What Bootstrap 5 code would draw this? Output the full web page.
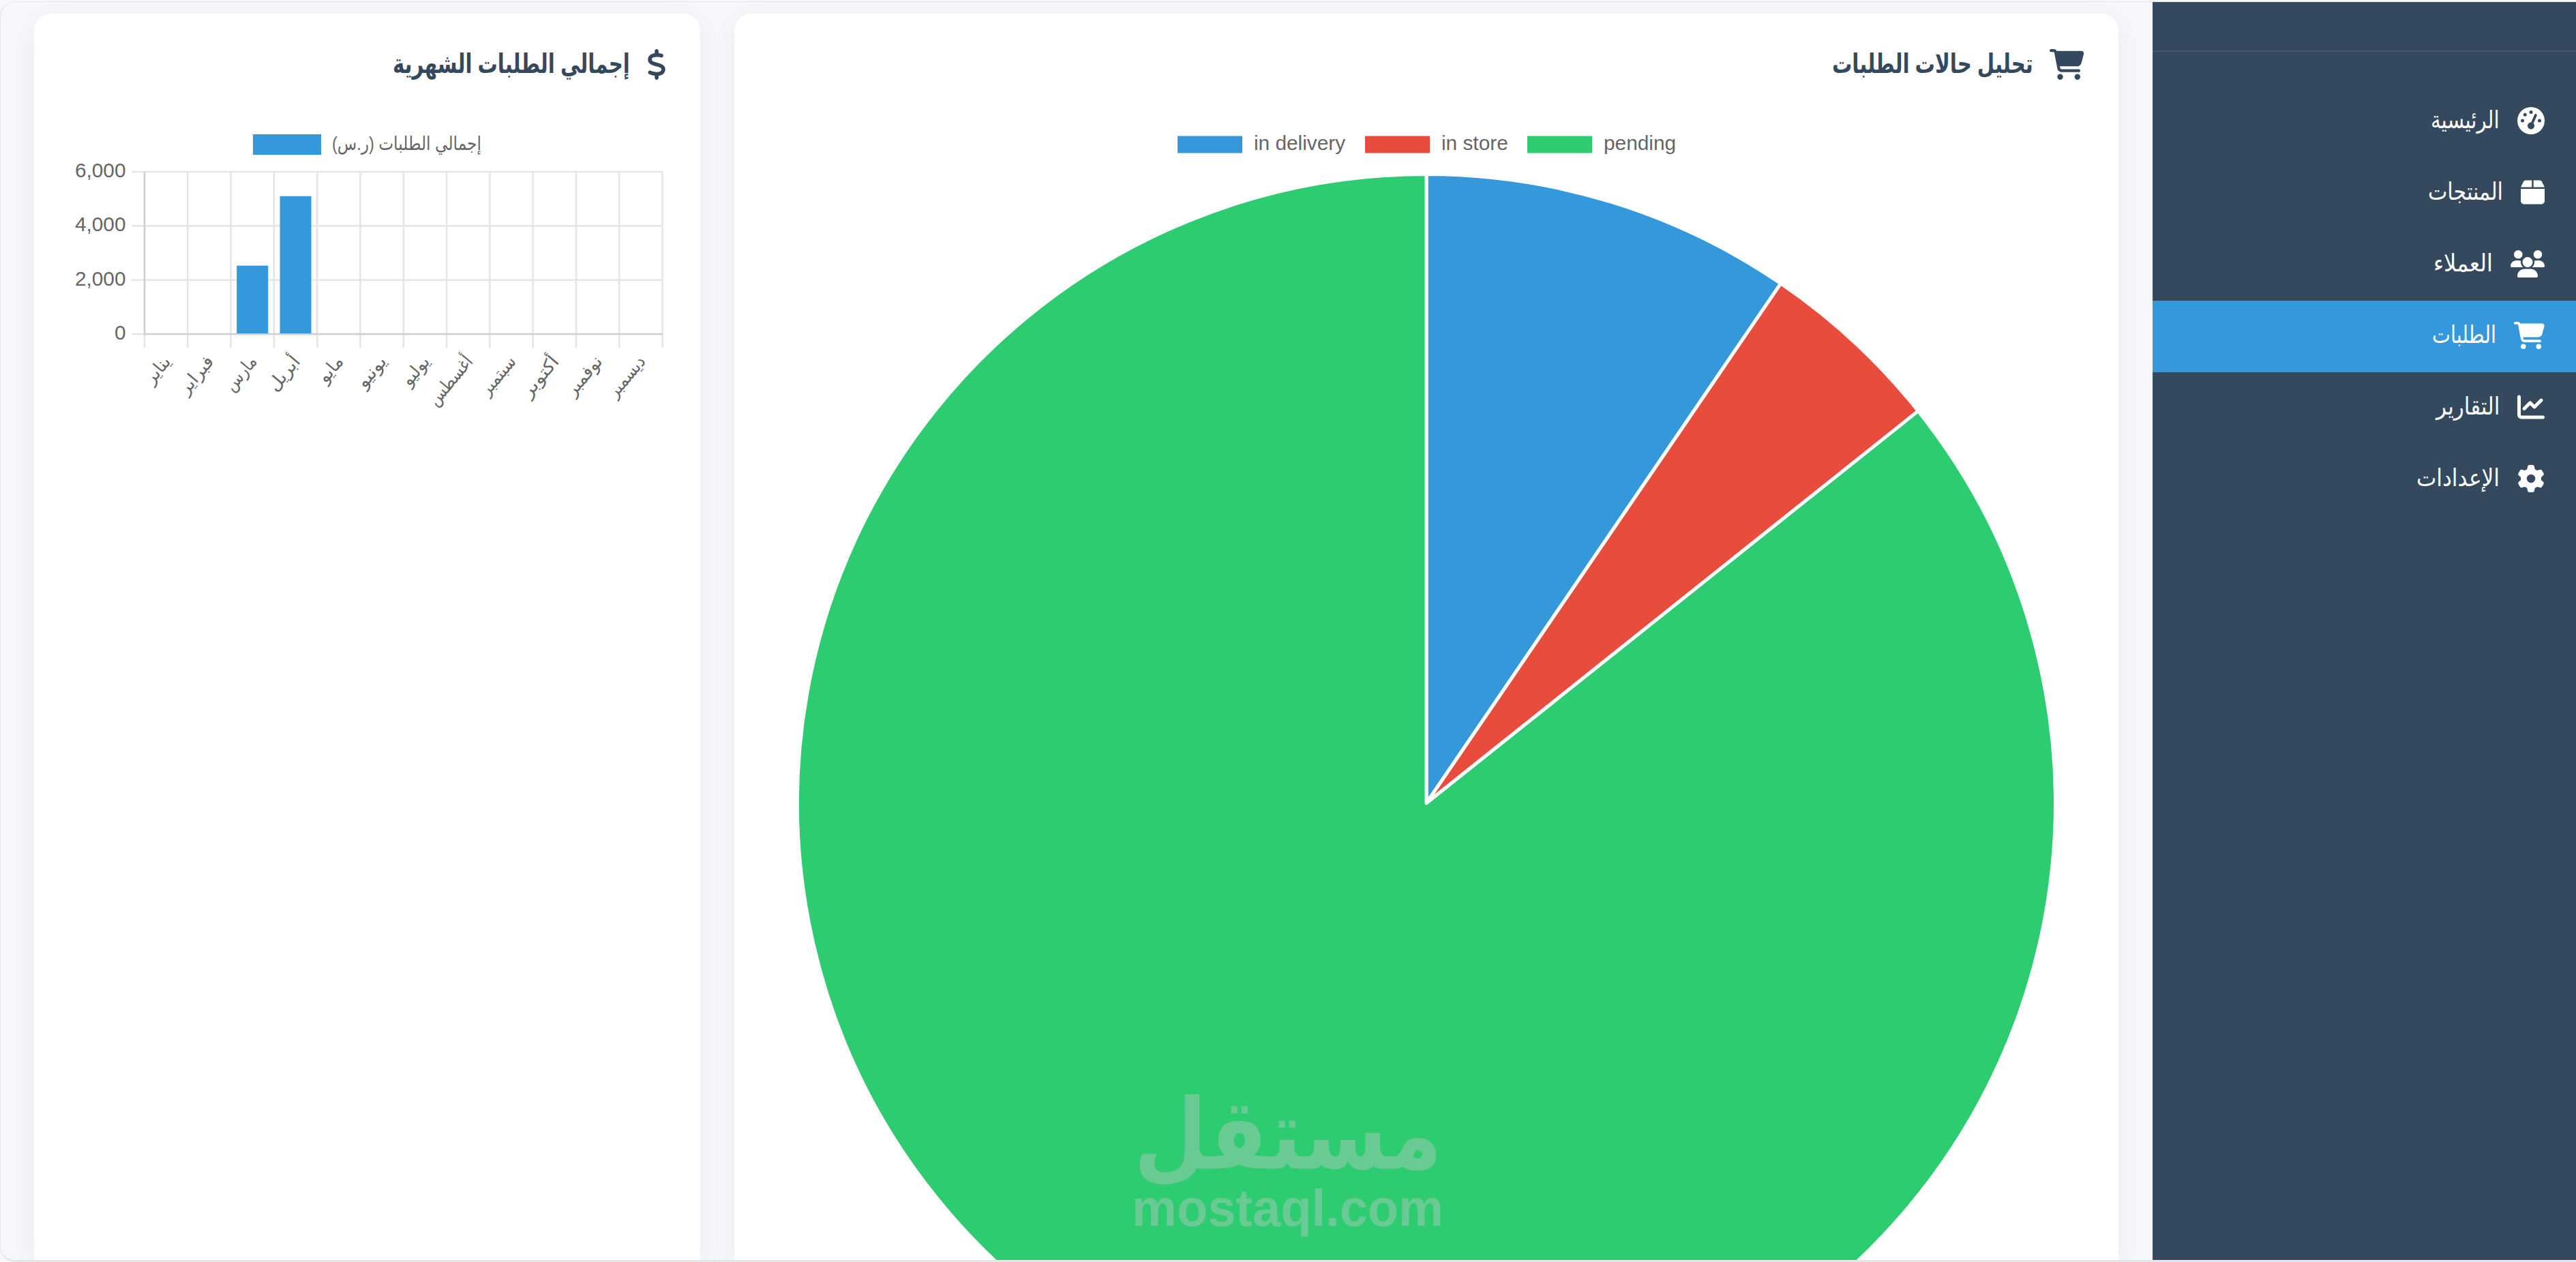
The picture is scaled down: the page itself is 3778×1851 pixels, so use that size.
<!DOCTYPE html>
<html lang="ar" dir="rtl">
<head>
  <meta charset="UTF-8">
  <meta name="viewport" content="width=device-width, initial-scale=1.0">
  <title>الطلبات</title>
  <link href="https://cdn.jsdelivr.net/npm/bootstrap@5.3.2/dist/css/bootstrap.min.css" rel="stylesheet">
  <style>
    body {
      background-color: #f5f7fb;
      font-family: "Liberation Sans", "DejaVu Sans", sans-serif;
      overflow: hidden;
    }
    .page {
      height: 1851px;
      padding-top: 2px;
    }
    .frame {
      border: 1px solid #e4e7e9;
      border-right: 0;
      border-bottom: 3px solid #e4e7e9;
      border-radius: 22px 0 0 22px;
      overflow: hidden;
    }
    .sidebar {
      width: 621px;
      background-color: #34495e;
    }
    .sidebar-header {
      height: 73px;
      border-bottom: 2px solid #46586e;
      margin-bottom: 50px;
    }
    .menu-link {
      height: 105px;
      padding: 0 46px 4px;
      gap: 26px;
      color: #fff;
      font-size: 35px;
    }
    .menu-link:hover { color: #fff; }
    .menu-link.active { background-color: #3498db; }
    .menu-link svg { height: 40px; }
    .panels {
      gap: 50px;
      padding: 17px 50px 0;
    }
    .panel {
      border-radius: 25px 25px 0 0;
      box-shadow: 0 10px 37px rgba(0, 0, 0, .05);
      padding: 50px;
    }
    .panel-orders { width: 2030px; }
    .panel-monthly { width: 977px; }
    .panel h3 {
      height: 50px;
      gap: 25px;
      margin-bottom: 0;
      padding-bottom: 2px;
      color: #34495e;
      font-size: 39px;
      font-weight: 700;
    }
    .panel h3 svg { height: 45px; }
    .fit {
      white-space: nowrap;
      transform-origin: right center;
    }
    svg { fill: currentColor; flex: none; }
    .chart {
      overflow: visible;
      color: #666;
      font-size: 29.8px;
      direction: ltr;
    }
    .watermark {
      left: 1650px;
      top: 1570px;
      color: #69cb93;
      font-weight: 700;
      direction: ltr;
    }
  </style>
</head>
<body>
  <div class="page">
    <div class="frame d-flex h-100">
      <nav class="sidebar flex-shrink-0">
        <div class="sidebar-header"></div>
        <a href="#" class="menu-link d-flex align-items-center text-decoration-none">
          <svg viewBox="0 0 512 512"><path d="M0 256a256 256 0 1 1 512 0A256 256 0 1 1 0 256zM288 96a32 32 0 1 0 -64 0 32 32 0 1 0 64 0zM256 416c35.3 0 64-28.7 64-64c0-17.4-6.9-33.1-18.1-44.6L366 161.7c5.3-12.1-.2-26.3-12.3-31.6s-26.3 .2-31.6 12.3L257.9 288c-.6 0-1.3 0-1.9 0c-35.3 0-64 28.7-64 64s28.7 64 64 64zM176 144a32 32 0 1 0 -64 0 32 32 0 1 0 64 0zM96 288a32 32 0 1 0 0-64 32 32 0 1 0 0 64zm352-32a32 32 0 1 0 -64 0 32 32 0 1 0 64 0z"/></svg>
          <span class="fit" data-width="101">الرئيسية</span>
        </a>
        <a href="#" class="menu-link d-flex align-items-center text-decoration-none">
          <svg viewBox="0 0 448 512"><path d="M50.7 58.5L0 160H208V32H93.7C75.5 32 58.9 42.3 50.7 58.5zM240 160H448L397.3 58.5C389.1 42.3 372.5 32 354.3 32H240V160zm208 32H0V416c0 35.3 28.7 64 64 64H384c35.3 0 64-28.7 64-64V192z"/></svg>
          <span class="fit" data-width="110">المنتجات</span>
        </a>
        <a href="#" class="menu-link d-flex align-items-center text-decoration-none">
          <svg viewBox="0 0 640 512"><path d="M144 0a80 80 0 1 1 0 160A80 80 0 1 1 144 0zM512 0a80 80 0 1 1 0 160A80 80 0 1 1 512 0zM0 298.7C0 239.8 47.8 192 106.7 192h42.7c15.9 0 31 3.5 44.6 9.7c-1.3 7.2-1.9 14.7-1.9 22.3c0 38.2 16.8 72.5 43.3 96c-.2 0-.4 0-.7 0H21.3C9.6 320 0 310.4 0 298.7zM405.3 320c-.2 0-.4 0-.7 0c26.6-23.5 43.3-57.8 43.3-96c0-7.6-.7-15-1.9-22.3c13.6-6.3 28.7-9.7 44.6-9.7h42.7C592.2 192 640 239.8 640 298.7c0 11.8-9.6 21.3-21.3 21.3H405.3zM224 224a96 96 0 1 1 192 0 96 96 0 1 1 -192 0zM128 485.3C128 411.7 187.7 352 261.3 352H378.7C452.3 352 512 411.7 512 485.3c0 14.7-11.9 26.7-26.7 26.7H154.7c-14.7 0-26.7-11.9-26.7-26.7z"/></svg>
          <span class="fit" data-width="87">العملاء</span>
        </a>
        <a href="#" class="menu-link active d-flex align-items-center text-decoration-none">
          <svg viewBox="0 0 576 512"><path d="M0 24C0 10.7 10.7 0 24 0H69.5c22 0 41.5 12.8 50.6 32h411c26.3 0 45.5 25 38.6 50.4l-41 152.3c-8.5 31.4-37 53.3-69.5 53.3H170.7l5.4 28.5c2.2 11.3 12.1 19.5 23.6 19.5H488c13.3 0 24 10.7 24 24s-10.7 24-24 24H199.7c-34.6 0-64.3-24.6-70.7-58.5L77.4 54.5c-.7-3.8-4-6.5-7.9-6.5H24C10.7 48 0 37.3 0 24zM128 464a48 48 0 1 1 96 0 48 48 0 1 1 -96 0zm336-48a48 48 0 1 1 0 96 48 48 0 1 1 0-96z"/></svg>
          <span class="fit" data-width="94">الطلبات</span>
        </a>
        <a href="#" class="menu-link d-flex align-items-center text-decoration-none">
          <svg viewBox="0 0 512 512"><path d="M64 64c0-17.7-14.3-32-32-32S0 46.3 0 64V400c0 44.2 35.8 80 80 80H480c17.7 0 32-14.3 32-32s-14.3-32-32-32H80c-8.8 0-16-7.2-16-16V64zm406.6 86.6c12.5-12.5 12.5-32.8 0-45.3s-32.8-12.5-45.3 0L320 210.7l-57.4-57.4c-12.5-12.5-32.8-12.5-45.3 0l-112 112c-12.5 12.5-12.5 32.8 0 45.3s32.8 12.5 45.3 0L240 221.3l57.4 57.4c12.5 12.5 32.8 12.5 45.3 0l128-128z"/></svg>
          <span class="fit" data-width="93">التقارير</span>
        </a>
        <a href="#" class="menu-link d-flex align-items-center text-decoration-none">
          <svg viewBox="0 0 512 512"><path d="M495.9 166.6c3.2 8.7 .5 18.4-6.4 24.6l-43.3 39.4c1.1 8.3 1.7 16.8 1.7 25.4s-.6 17.1-1.7 25.4l43.3 39.4c6.9 6.2 9.6 15.9 6.4 24.6c-4.4 11.9-9.7 23.3-15.8 34.3l-4.7 8.1c-6.6 11-14 21.4-22.1 31.2c-5.9 7.2-15.7 9.6-24.5 6.8l-55.7-17.7c-13.4 10.3-28.2 18.9-44 25.4l-12.5 57.1c-2 9.1-9 16.3-18.2 17.8c-13.8 2.3-28 3.5-42.5 3.5s-28.7-1.2-42.5-3.5c-9.2-1.5-16.2-8.7-18.2-17.8l-12.5-57.1c-15.8-6.5-30.6-15.1-44-25.4L83.1 425.9c-8.8 2.8-18.6 .3-24.5-6.8c-8.1-9.8-15.5-20.2-22.1-31.2l-4.7-8.1c-6.1-11-11.4-22.4-15.8-34.3c-3.2-8.7-.5-18.4 6.4-24.6l43.3-39.4C64.6 273.1 64 264.6 64 256s.6-17.1 1.7-25.4L22.4 191.2c-6.9-6.2-9.6-15.9-6.4-24.6c4.4-11.9 9.7-23.3 15.8-34.3l4.7-8.1c6.6-11 14-21.4 22.1-31.2c5.9-7.2 15.7-9.6 24.5-6.8l55.7 17.7c13.4-10.3 28.2-18.9 44-25.4l12.5-57.1c2-9.1 9-16.3 18.2-17.8C227.3 1.2 241.5 0 256 0s28.7 1.2 42.5 3.5c9.2 1.5 16.2 8.7 18.2 17.8l12.5 57.1c15.8 6.5 30.6 15.1 44 25.4l55.7-17.7c8.8-2.8 18.6-.3 24.5 6.8c8.1 9.8 15.5 20.2 22.1 31.2l4.7 8.1c6.1 11 11.4 22.4 15.8 34.3zM256 336a80 80 0 1 0 0-160 80 80 0 1 0 0 160z"/></svg>
          <span class="fit" data-width="122">الإعدادات</span>
        </a>
      </nav>

      <main class="panels d-flex flex-grow-1">
        <section class="panel panel-orders bg-white flex-shrink-0">
          <h3 class="d-flex align-items-center">
            <svg viewBox="0 0 576 512"><path d="M0 24C0 10.7 10.7 0 24 0H69.5c22 0 41.5 12.8 50.6 32h411c26.3 0 45.5 25 38.6 50.4l-41 152.3c-8.5 31.4-37 53.3-69.5 53.3H170.7l5.4 28.5c2.2 11.3 12.1 19.5 23.6 19.5H488c13.3 0 24 10.7 24 24s-10.7 24-24 24H199.7c-34.6 0-64.3-24.6-70.7-58.5L77.4 54.5c-.7-3.8-4-6.5-7.9-6.5H24C10.7 48 0 37.3 0 24zM128 464a48 48 0 1 1 96 0 48 48 0 1 1 -96 0zm336-48a48 48 0 1 1 0 96 48 48 0 1 1 0-96z"/></svg>
            <span class="fit" data-width="295">تحليل حالات الطلبات</span>
          </h3>
          <!-- Order status pie -->
          <svg class="chart d-block" id="status-chart" width="1930" height="1930"></svg>
        </section>

        <section class="panel panel-monthly bg-white flex-shrink-0">
          <h3 class="d-flex align-items-center">
            <svg viewBox="0 0 320 512"><path d="M160 0c17.7 0 32 14.3 32 32V67.7c1.6 .2 3.1 .4 4.7 .7c.4 .1 .7 .1 1.1 .2l48 8.8c17.4 3.2 28.9 19.9 25.7 37.2s-19.9 28.9-37.2 25.7l-47.5-8.7c-31.3-4.6-58.9-1.5-78.3 6.2s-27.2 18.3-29 28.1c-2 10.7-.5 16.7 1.2 20.4c1.8 3.9 5.5 8.3 12.8 13.2c16.3 10.7 41.3 17.7 73.7 26.3l2.9 .8c28.6 7.6 63.6 16.8 89.6 33.8c14.2 9.3 27.6 21.9 35.9 39.5c8.5 17.9 10.3 37.9 6.4 59.2c-6.9 38-33.1 63.4-65.6 76.7c-13.7 5.6-28.6 9.2-44.4 11V480c0 17.7-14.3 32-32 32s-32-14.3-32-32V445.1c-.4-.1-.9-.1-1.3-.2l-.2 0 0 0c-24.4-3.8-64.5-14.3-91.5-26.3c-16.1-7.2-23.4-26.1-16.2-42.2s26.1-23.4 42.2-16.2c20.9 9.3 55.3 18.5 75.2 21.6c31.9 4.7 58.2 2 76-5.3c16.9-6.9 24.6-16.9 26.8-28.9c1.9-10.6 .4-16.7-1.3-20.4c-1.9-4-5.6-8.4-13-13.3c-16.4-10.7-41.5-17.7-74-26.3l-2.8-.7C119.4 279.3 84.4 270 58.4 253c-14.2-9.3-27.5-22-35.8-39.6c-8.4-17.9-10.1-37.9-6.1-59.2C23.7 116 52.3 91.2 84.8 78.3c13.3-5.3 27.9-8.9 43.2-11V32c0-17.7 14.3-32 32-32z"/></svg>
            <span class="fit" data-width="348">إجمالي الطلبات الشهرية</span>
          </h3>
          <!-- Monthly totals bar chart -->
          <svg class="chart d-block" id="monthly-chart" width="877" height="440"></svg>
        </section>
      </main>
    </div>
  </div>

  <svg class="watermark position-absolute" width="480" height="280">
    <text x="239" y="144" font-size="144" text-anchor="middle" textLength="452" lengthAdjust="spacingAndGlyphs">مستقل</text>
    <text x="10" y="228" font-size="76" textLength="457" lengthAdjust="spacingAndGlyphs">mostaql.com</text>
  </svg>

  <script src="https://cdn.jsdelivr.net/npm/bootstrap@5.3.2/dist/js/bootstrap.bundle.min.js"></script>
  <script>
    const statuses = [
      { label: 'in delivery', value: 2, color: '#3498db', x: 600 },
      { label: 'in store', value: 1, color: '#e74c3c', x: 875 },
      { label: 'pending', value: 18, color: '#2ecc71', x: 1113 }
    ];

    // [name, total, label length]
    const months = [
      ['يناير', 0, 44], ['فبراير', 0, 64], ['مارس', 2530, 58], ['أبريل', 5100, 58],
      ['مايو', 0, 42], ['يونيو', 0, 52], ['يوليو', 0, 48], ['أغسطس', 0, 86],
      ['سبتمبر', 0, 66], ['أكتوبر', 0, 70], ['نوفمبر', 0, 67], ['ديسمبر', 0, 70]
    ];

    function drawStatusChart() {
      const cx = 965, cy = 1058, r = 922.5;
      const total = statuses.reduce((sum, s) => sum + s.value, 0);
      let angle = 0;
      let html = '';
      statuses.forEach(s => {
        const next = angle + s.value / total * 2 * Math.PI;
        const large = next - angle > Math.PI ? 1 : 0;
        html += `<path d="M${cx} ${cy}L${cx + r * Math.sin(angle)} ${cy - r * Math.cos(angle)}A${r} ${r} 0 ${large} 1 ${cx + r * Math.sin(next)} ${cy - r * Math.cos(next)}Z" fill="${s.color}" stroke="#fff" stroke-width="5" stroke-linejoin="round"/>`;
        html += `<rect x="${s.x}" y="79.5" width="95" height="25" fill="${s.color}"/>`;
        html += `<text x="${s.x + 112}" y="100">${s.label}</text>`;
        angle = next;
      });
      document.getElementById('status-chart').innerHTML = html;
    }

    function drawMonthlyChart() {
      const left = 112, right = 871.5, top = 132, bottom = 370, max = 6000;
      const step = (right - left) / months.length;
      let html = '<rect x="271" y="77" width="100" height="30" fill="#3498db"/>';
      html += '<text x="387" y="100" font-size="28" textLength="219" lengthAdjust="spacingAndGlyphs">إجمالي الطلبات (ر.س)</text>';
      for (let v = 0; v <= max; v += 2000) {
        const y = bottom - v / max * (bottom - top);
        html += `<path d="M93 ${y}H${right}" stroke="#e5e5e5" stroke-width="2.5"/>`;
        html += `<text x="84.5" y="${y + 8}" text-anchor="end">${v.toLocaleString('en-US')}</text>`;
      }
      for (let i = 0; i <= months.length; i++) {
        html += `<path d="M${left + i * step} ${top}V390" stroke="#e5e5e5" stroke-width="2.5"/>`;
      }
      html += `<path d="M${left} ${top}V${bottom}H${right}" fill="none" stroke="#cfcfcf" stroke-width="2.5"/>`;
      months.forEach(([name, value, length], i) => {
        const x = left + (i + .5) * step;
        const h = value / max * (bottom - top);
        if (value) {
          html += `<rect x="${x - 23}" y="${bottom - h}" width="46" height="${h - 1}" fill="#3498db"/>`;
        }
        html += `<text transform="translate(${x + 8} 411) rotate(-50)" x="${-length}" font-size="26" textLength="${length}" lengthAdjust="spacingAndGlyphs">${name}</text>`;
      });
      document.getElementById('monthly-chart').innerHTML = html;
    }

    function fitLabels() {
      document.querySelectorAll('.fit').forEach(el => {
        el.style.transform = `scaleX(${el.dataset.width / el.offsetWidth})`;
      });
    }

    drawStatusChart();
    drawMonthlyChart();
    fitLabels();
  </script>
</body>
</html>
